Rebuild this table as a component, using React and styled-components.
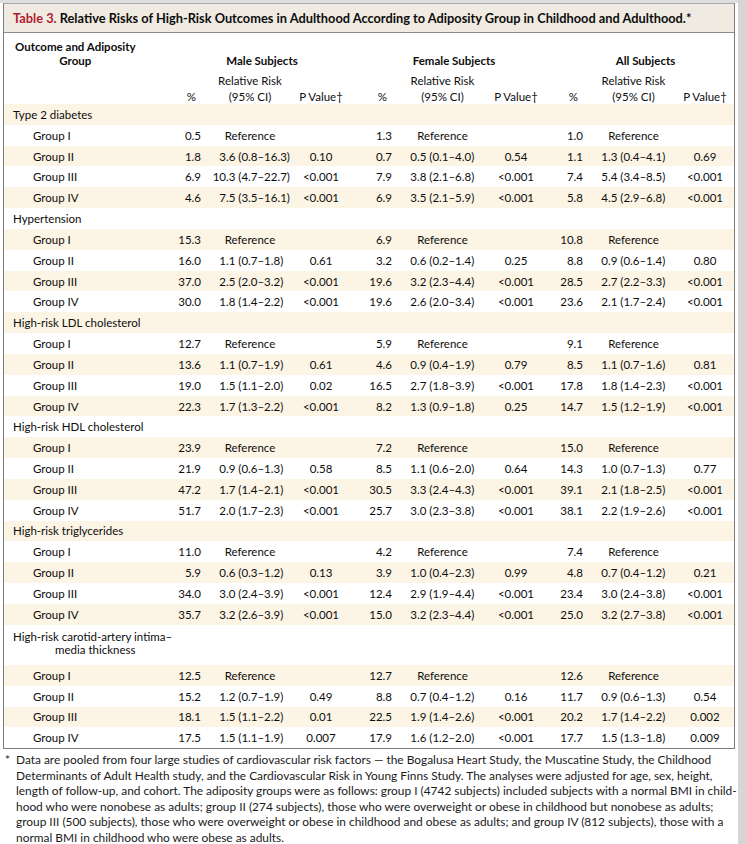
import styled, { createGlobalStyle } from "styled-components";

const GlobalStyle = createGlobalStyle`
  html, body {
    margin: 0;
    padding: 0;
    background: #ffffff;
  }
  body {
    font-family: Lato, "Open Sans", "Liberation Sans", sans-serif;
    color: #0d0d0d;
  }
`;

const COLS = "168px 30px 96px 46px 49px 99px 48px 44px 99px 44px 7px";

const REF = "ref";

const sections = [
  {
    title: "Type 2 diabetes",
    rows: [
      ["Group I", "0.5", REF, "", "1.3", REF, "", "1.0", REF, ""],
      ["Group II", "1.8", "3.6 (0.8–16.3)", "0.10", "0.7", "0.5 (0.1–4.0)", "0.54", "1.1", "1.3 (0.4–4.1)", "0.69"],
      ["Group III", "6.9", "10.3 (4.7–22.7)", "<0.001", "7.9", "3.8 (2.1–6.8)", "<0.001", "7.4", "5.4 (3.4–8.5)", "<0.001"],
      ["Group IV", "4.6", "7.5 (3.5–16.1)", "<0.001", "6.9", "3.5 (2.1–5.9)", "<0.001", "5.8", "4.5 (2.9–6.8)", "<0.001"],
    ],
  },
  {
    title: "Hypertension",
    rows: [
      ["Group I", "15.3", REF, "", "6.9", REF, "", "10.8", REF, ""],
      ["Group II", "16.0", "1.1 (0.7–1.8)", "0.61", "3.2", "0.6 (0.2–1.4)", "0.25", "8.8", "0.9 (0.6–1.4)", "0.80"],
      ["Group III", "37.0", "2.5 (2.0–3.2)", "<0.001", "19.6", "3.2 (2.3–4.4)", "<0.001", "28.5", "2.7 (2.2–3.3)", "<0.001"],
      ["Group IV", "30.0", "1.8 (1.4–2.2)", "<0.001", "19.6", "2.6 (2.0–3.4)", "<0.001", "23.6", "2.1 (1.7–2.4)", "<0.001"],
    ],
  },
  {
    title: "High-risk LDL cholesterol",
    rows: [
      ["Group I", "12.7", REF, "", "5.9", REF, "", "9.1", REF, ""],
      ["Group II", "13.6", "1.1 (0.7–1.9)", "0.61", "4.6", "0.9 (0.4–1.9)", "0.79", "8.5", "1.1 (0.7–1.6)", "0.81"],
      ["Group III", "19.0", "1.5 (1.1–2.0)", "0.02", "16.5", "2.7 (1.8–3.9)", "<0.001", "17.8", "1.8 (1.4–2.3)", "<0.001"],
      ["Group IV", "22.3", "1.7 (1.3–2.2)", "<0.001", "8.2", "1.3 (0.9–1.8)", "0.25", "14.7", "1.5 (1.2–1.9)", "<0.001"],
    ],
  },
  {
    title: "High-risk HDL cholesterol",
    rows: [
      ["Group I", "23.9", REF, "", "7.2", REF, "", "15.0", REF, ""],
      ["Group II", "21.9", "0.9 (0.6–1.3)", "0.58", "8.5", "1.1 (0.6–2.0)", "0.64", "14.3", "1.0 (0.7–1.3)", "0.77"],
      ["Group III", "47.2", "1.7 (1.4–2.1)", "<0.001", "30.5", "3.3 (2.4–4.3)", "<0.001", "39.1", "2.1 (1.8–2.5)", "<0.001"],
      ["Group IV", "51.7", "2.0 (1.7–2.3)", "<0.001", "25.7", "3.0 (2.3–3.8)", "<0.001", "38.1", "2.2 (1.9–2.6)", "<0.001"],
    ],
  },
  {
    title: "High-risk triglycerides",
    rows: [
      ["Group I", "11.0", REF, "", "4.2", REF, "", "7.4", REF, ""],
      ["Group II", "5.9", "0.6 (0.3–1.2)", "0.13", "3.9", "1.0 (0.4–2.3)", "0.99", "4.8", "0.7 (0.4–1.2)", "0.21"],
      ["Group III", "34.0", "3.0 (2.4–3.9)", "<0.001", "12.4", "2.9 (1.9–4.4)", "<0.001", "23.4", "3.0 (2.4–3.8)", "<0.001"],
      ["Group IV", "35.7", "3.2 (2.6–3.9)", "<0.001", "15.0", "3.2 (2.3–4.4)", "<0.001", "25.0", "3.2 (2.7–3.8)", "<0.001"],
    ],
  },
  {
    title: ["High-risk carotid-artery intima–", "media thickness"],
    rows: [
      ["Group I", "12.5", REF, "", "12.7", REF, "", "12.6", REF, ""],
      ["Group II", "15.2", "1.2 (0.7–1.9)", "0.49", "8.8", "0.7 (0.4–1.2)", "0.16", "11.7", "0.9 (0.6–1.3)", "0.54"],
      ["Group III", "18.1", "1.5 (1.1–2.2)", "0.01", "22.5", "1.9 (1.4–2.6)", "<0.001", "20.2", "1.7 (1.4–2.2)", "0.002"],
      ["Group IV", "17.5", "1.5 (1.1–1.9)", "0.007", "17.9", "1.6 (1.2–2.0)", "<0.001", "17.7", "1.5 (1.3–1.8)", "0.009"],
    ],
  },
];

const footLines = [
  "Data are pooled from four large studies of cardiovascular risk factors — the Bogalusa Heart Study, the Muscatine Study, the Childhood",
  "Determinants of Adult Health study, and the Cardiovascular Risk in Young Finns Study. The analyses were adjusted for age, sex, height,",
  "length of follow-up, and cohort. The adiposity groups were as follows: group I (4742 subjects) included subjects with a normal BMI in child-",
  "hood who were nonobese as adults; group II (274 subjects), those who were overweight or obese in childhood but nonobese as adults;",
  "group III (500 subjects), those who were overweight or obese in childhood and obese as adults; and group IV (812 subjects), those with a",
  "normal BMI in childhood who were obese as adults.",
];

const Page = styled.div`
  display: flex;
  height: 100vh;
  overflow: hidden;
`;

const Content = styled.div`
  width: 738px;
  border-top: 3px solid #dedede;
  padding: 0 3px;
  box-sizing: border-box;
`;

const ScrollStrip = styled.div`
  width: 8px;
  background: #d6d6d6;
`;

const TableBox = styled.div`
  border: 1px solid #7c7c7c;
  border-top: none;
`;

const TitleBar = styled.div`
  height: 30px;
  display: flex;
  align-items: center;
  padding-left: 9px;
  background: #efebe2;
  border-bottom: 1px solid #8a8a8a;
  border-top: 1px solid #a8a8a8;
  box-sizing: border-box;
  font-size: 12.8px;
  font-weight: 700;
  white-space: nowrap;
`;

const TableNo = styled.span`
  color: #b01c2e;
`;

const Header = styled.div`
  display: grid;
  grid-template-columns: ${COLS};
  padding-top: 7px;
  height: 71px;
  box-sizing: border-box;
  font-size: 11.5px;
`;

const LabelHead = styled.div`
  grid-column: 1;
  grid-row: 1;
  justify-self: start;
  padding-left: 11px;
  text-align: center;
  font-weight: 700;
  line-height: 14px;
`;

const GroupHead = styled.div`
  grid-column: ${(p) => p.$from} / span 3;
  grid-row: 1;
  align-self: end;
  text-align: center;
  padding-left: ${(p) => p.$shift}px;
  font-weight: 700;
  line-height: 14px;
  white-space: nowrap;
`;

const SubHead = styled.div`
  grid-column: ${(p) => p.$col};
  grid-row: 2;
  align-self: end;
  margin-top: 5px;
  text-align: ${(p) => (p.$pct ? "right" : "center")};
  padding-right: ${(p) => (p.$pct ? 6 : 0)}px;
  line-height: 16px;
  white-space: nowrap;
`;

const Row = styled.div`
  display: grid;
  grid-template-columns: ${COLS};
  align-items: center;
  height: ${(p) => (p.$tall ? 40.2 : 20.83)}px;
  background: ${(p) => (p.$shade ? "#fcf4e4" : "#ffffff")};
  font-size: 11.5px;
  white-space: nowrap;
`;

const SectionLabel = styled.div`
  grid-column: 1 / span 4;
  padding-left: 9px;
  line-height: 13.5px;
  align-self: ${(p) => (p.$tall ? "start" : "center")};
  padding-top: ${(p) => (p.$tall ? 5 : 0)}px;
`;

const Hang = styled.div`
  padding-left: 42px;
`;

const GroupLabel = styled.div`
  padding-left: 29px;
`;

const Pct = styled.div`
  text-align: right;
  padding-right: 1px;
`;

const Risk = styled.div`
  padding-left: 8px;
  text-align: ${(p) => (p.$ref ? "center" : "left")};
  padding-right: ${(p) => (p.$ref ? 8 : 0)}px;
`;

const IntPart = styled.span`
  display: inline-block;
  width: 16px;
  text-align: right;
`;

const PVal = styled.div`
  text-align: center;
`;

const Footnote = styled.div`
  padding: 3px 0 0 2px;
  font-size: 11.9px;
  line-height: 15.5px;
  color: #1a1a1a;
`;

const FootLine = styled.div`
  position: relative;
  padding-left: 11px;
  white-space: nowrap;
`;

const Mark = styled.span`
  position: absolute;
  left: 0;
`;

function RiskCell({ value }) {
  if (value === REF) return <Risk $ref>Reference</Risk>;
  const dot = value.indexOf(".");
  return (
    <Risk>
      <IntPart>{value.slice(0, dot)}</IntPart>
      {value.slice(dot)}
    </Risk>
  );
}

function DataRow({ row, shade }) {
  const [label, ...vals] = row;
  return (
    <Row $shade={shade}>
      <GroupLabel>{label}</GroupLabel>
      {[0, 1, 2].map((g) => [
        <Pct key={`p${g}`}>{vals[g * 3]}</Pct>,
        <RiskCell key={`r${g}`} value={vals[g * 3 + 1]} />,
        <PVal key={`v${g}`}>{vals[g * 3 + 2]}</PVal>,
      ])}
    </Row>
  );
}

export default function App() {
  let idx = 0;
  return (
    <>
      <GlobalStyle />
      <Page>
        <Content>
          <TableBox>
            <TitleBar>
              <TableNo>Table 3.&nbsp;</TableNo>
              Relative Risks of High-Risk Outcomes in Adulthood According to Adiposity Group in Childhood and Adulthood.*
            </TitleBar>
            <Header>
              <LabelHead>
                Outcome and Adiposity
                <br />
                Group
              </LabelHead>
              <GroupHead $from={2} $shift={8}>Male Subjects</GroupHead>
              <GroupHead $from={5} $shift={24}>Female Subjects</GroupHead>
              <GroupHead $from={8} $shift={24}>All Subjects</GroupHead>
              {[2, 5, 8].map((c) => [
                <SubHead key={`a${c}`} $col={c} $pct>%</SubHead>,
                <SubHead key={`b${c}`} $col={c + 1}>
                  Relative Risk
                  <br />
                  (95% CI)
                </SubHead>,
                <SubHead key={`c${c}`} $col={c + 2}>P Value†</SubHead>,
              ])}
            </Header>
            {sections.map((s) => {
              const tall = Array.isArray(s.title);
              const head = (
                <Row key={`s${idx}`} $shade={idx % 2 === 0} $tall={tall}>
                  <SectionLabel $tall={tall}>
                    {tall ? (
                      <>
                        {s.title[0]}
                        <Hang>{s.title[1]}</Hang>
                      </>
                    ) : (
                      s.title
                    )}
                  </SectionLabel>
                </Row>
              );
              idx += 1;
              const body = s.rows.map((r) => {
                const el = <DataRow key={`r${idx}`} row={r} shade={idx % 2 === 0} />;
                idx += 1;
                return el;
              });
              return [head, ...body];
            })}
          </TableBox>
          <Footnote>
            {footLines.map((l, i) => (
              <FootLine key={i}>
                {i === 0 && <Mark>*</Mark>}
                {l}
              </FootLine>
            ))}
            <FootLine>
              <Mark>†</Mark>P values are for the comparison with group I.
            </FootLine>
          </Footnote>
        </Content>
        <ScrollStrip />
      </Page>
    </>
  );
}
